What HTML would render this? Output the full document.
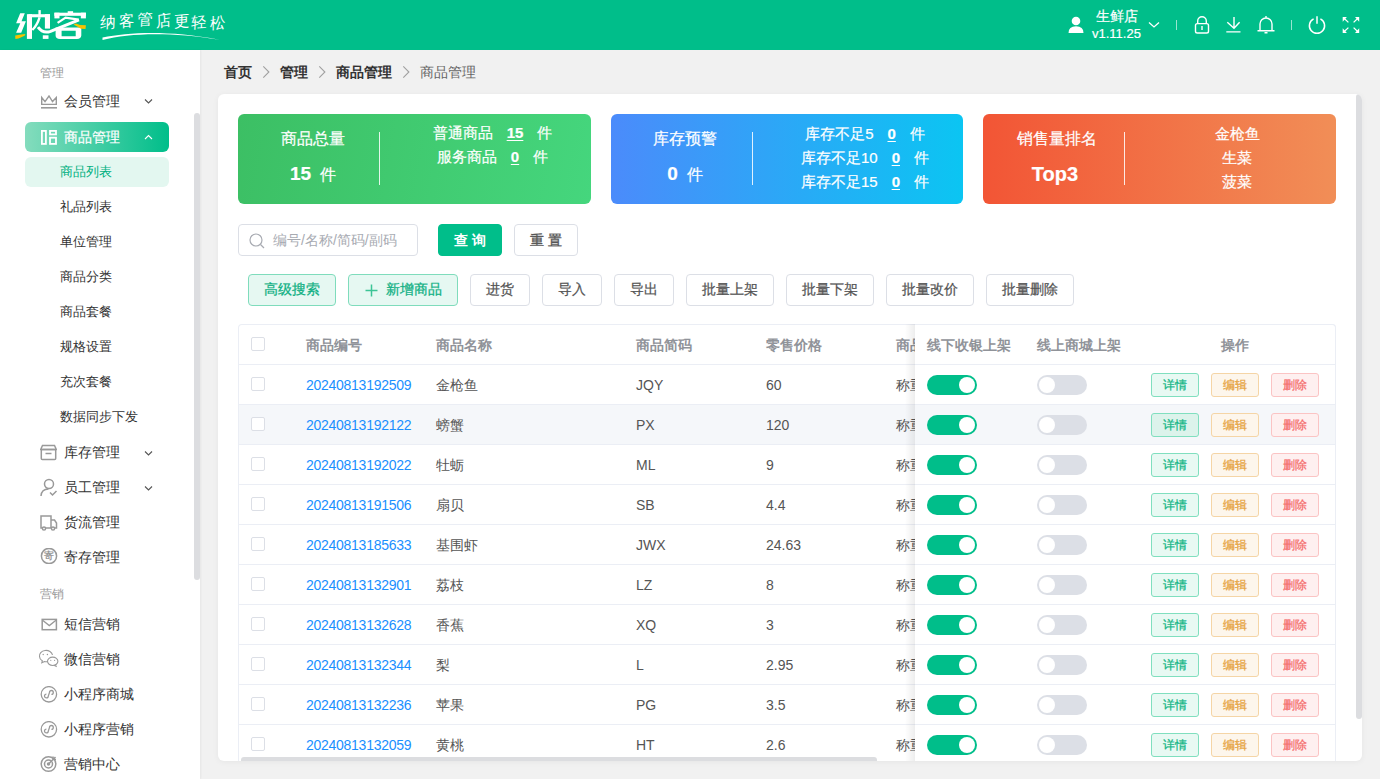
<!DOCTYPE html><html><head><meta charset="utf-8"><style>
*{box-sizing:border-box;margin:0;padding:0}
html,body{width:1380px;height:779px;overflow:hidden;background:#f1f1f1;font-family:"Liberation Sans",sans-serif;color:#333}
div,span{position:absolute;white-space:nowrap}
#hdr{left:0;top:0;width:1380px;height:50px;background:#00be8a}
#side{left:0;top:50px;width:200px;height:729px;background:#fff;box-shadow:1px 0 2px rgba(0,0,0,.05)}
.sec{left:40px;font-size:12px;color:#999;line-height:14px}
.mi{left:64px;font-size:14px;color:#333;line-height:16px}
.sub{left:60px;font-size:13px;color:#333;line-height:15px}
svg{position:absolute}
#card{left:218px;top:94px;width:1144px;height:667px;background:#fff;border-radius:6px;overflow:hidden;box-shadow:0 1px 6px rgba(0,0,0,.05)}
.stat{top:20px;height:90px;border-radius:6px;color:#fff}
.wt{-webkit-text-stroke:0.2px #fff}
.btn{height:32px;border:1px solid #dcdfe6;border-radius:4px;background:#fff;font-size:14px;color:#555;text-align:center;line-height:28px;-webkit-text-stroke:0.25px currentColor}
.th{font-size:14px;font-weight:bold;color:#909399;line-height:16px}
.td{font-size:14px;color:#555;line-height:16px}
.cb{width:14px;height:14px;border:1px solid #dcdfe6;border-radius:2px;background:#fff}
.sw{width:50px;height:20px;border-radius:10px}
.son{background:#00be8a}
.soff{background:#dcdfe6}
.knob{top:2px;width:16px;height:16px;border-radius:8px;background:#fff}
.ob{width:48px;height:24px;border-radius:3px;font-size:12px;text-align:center;line-height:22px;border:1px solid;-webkit-text-stroke:0.25px currentColor}
.ob1{background:#e8f9f3;border-color:#80dfbf;color:#10b584}
.ob2{background:#fdf6ec;border-color:#f5d5a6;color:#e6a23c}
.ob3{background:#fef0f0;border-color:#fbc4c4;color:#f56c6c}
</style></head><body>
<div id="hdr">
<svg style="left:0;top:0" width="240" height="50" viewBox="0 0 240 50">
<g fill="#fff">
<polygon points="20.2,13.2 24.8,13.2 21.5,21.2 25.9,21.2 21.2,32.7 16.1,32.7 20.3,23.2 16.1,23.2"/>
<rect x="26.9" y="14.2" width="5.1" height="24.7"/>
<rect x="28.4" y="14.2" width="21.6" height="3.1"/>
<rect x="38.4" y="10.1" width="2.4" height="7.2"/>
<rect x="44.9" y="14.2" width="5.1" height="14.4"/>
<rect x="42.8" y="35.3" width="5.7" height="3.6"/>
<rect x="67.7" y="11.2" width="5.4" height="2.5"/>
<rect x="54.4" y="12.7" width="31.5" height="3.1"/>
<rect x="54.4" y="12.7" width="5.1" height="5.7"/>
<rect x="80.8" y="12.7" width="5.1" height="5.7"/>
<path d="M55.6 27.6 H81.3 V35.5 Q81 38.9 77 38.9 H60 Q55.6 38.9 55.6 35.5 Z M61.6 30.7 V36.3 H75.7 V30.7 Z" fill-rule="evenodd"/>
</g>
<g fill="none" stroke="#fff" stroke-linecap="butt">
<path d="M39.6 17.3 Q37.2 25 32.3 30" stroke-width="2.4"/>
<path d="M38 27.2 Q43 34 50.5 31.3 L79 19.8" stroke-width="3"/>
<path d="M57.6 22.8 L65.6 17.6 L78.6 19.6" stroke-width="2.2"/>
</g>
<polygon fill="#f6c200" points="15.2,35.6 21,34.6 25.4,34.1 24.6,35.7 18.5,38.4 15.4,38.9"/>
<polygon fill="#f6c200" points="73.6,24.6 75.8,23.4 80,25 85.9,25.2 85.5,28.9 81,28.7"/>
</svg>
<svg style="left:0;top:0" width="240" height="50" viewBox="0 0 240 50"><text x="102" y="27" font-size="15.5" fill="#fff" transform="rotate(-4 109 21) skewX(-6)" style="font-family:'Liberation Serif',serif">纳</text><text x="121" y="26" font-size="15.5" fill="#fff" transform="rotate(-6 128 20) skewX(-6)" style="font-family:'Liberation Serif',serif">客</text><text x="139.5" y="25" font-size="15.5" fill="#fff" transform="rotate(-3 146.5 19) skewX(-6)" style="font-family:'Liberation Serif',serif">管</text><text x="157.5" y="26" font-size="15.5" fill="#fff" transform="rotate(-8 164.5 20) skewX(-6)" style="font-family:'Liberation Serif',serif">店</text><text x="176" y="26" font-size="15.5" fill="#fff" transform="rotate(-5 183 20) skewX(-6)" style="font-family:'Liberation Serif',serif">更</text><text x="193.5" y="27" font-size="15.5" fill="#fff" transform="rotate(-4 200.5 21) skewX(-6)" style="font-family:'Liberation Serif',serif">轻</text><text x="212" y="28" font-size="15.5" fill="#fff" transform="rotate(-6 219 22) skewX(-6)" style="font-family:'Liberation Serif',serif">松</text><path d="M102.5 40 C130 33 170 31.7 219.5 39.8 C170 30.4 130 32 102.5 37.6 Z" fill="#fff"/></svg>
<svg style="left:1066px;top:16px" width="20" height="18" viewBox="0 0 20 18"><circle cx="10" cy="5" r="4.3" fill="#fff"/><path d="M2.5 17 Q2.5 10.3 10 10.3 Q17.5 10.3 17.5 17 Z" fill="#fff"/></svg>
<div style="left:1096px;top:7px;font-size:14px;line-height:18px;color:#fff;-webkit-text-stroke:0.2px #fff">生鲜店</div>
<div style="left:1092px;top:25px;font-size:13px;line-height:17px;color:#fff;-webkit-text-stroke:0.2px #fff">v1.11.25</div>
<svg style="left:1147px;top:20px" width="14" height="10" viewBox="0 0 14 10"><path d="M2 2.5 L7 7 L12 2.5" stroke="#fff" stroke-width="1.3" fill="none"/></svg>
<div style="left:1176px;top:20px;width:1px;height:10px;background:rgba(255,255,255,.6)"></div>
<div style="left:1291px;top:20px;width:1px;height:10px;background:rgba(255,255,255,.6)"></div>
<svg style="left:1192px;top:15px" width="20" height="20" viewBox="0 0 20 20" fill="none" stroke="#fff" stroke-width="1.4"><path d="M5.7 8.6 V6 A4.3 4.3 0 0 1 14.3 6 V8.6"/><rect x="3.5" y="8.6" width="13" height="9.4" rx="1.8"/><path d="M10 11.1 V15.1"/></svg>
<svg style="left:1224px;top:15px" width="20" height="20" viewBox="0 0 20 20" fill="none" stroke="#fff" stroke-width="1.4"><path d="M10 2.1 V13 M3.3 7.2 L10 13.2 L15.6 7.2 M2.3 16.9 H16.5"/></svg>
<svg style="left:1256px;top:15px" width="20" height="20" viewBox="0 0 20 20" fill="none" stroke="#fff" stroke-width="1.4"><path d="M4 15.5 V9 A6 6 0 0 1 16 9 V15.5 M1.5 15.8 H18.5 M10 1 V3 M8.5 17.8 H11.5"/></svg>
<svg style="left:1307px;top:15px" width="20" height="20" viewBox="0 0 20 20" fill="none" stroke="#fff" stroke-width="1.5"><path d="M6.6 3.9 A7.6 7.6 0 1 0 13.4 3.9 M10 1.2 V8.8"/></svg>
<svg style="left:1341px;top:15px" width="20" height="20" viewBox="0 0 20 20"><g fill="#fff"><polygon points="1.7,1.9 5.9,1.9 1.7,6.8"/><polygon points="18.2,1.9 14,1.9 18.2,6.8"/><polygon points="1.7,18.1 5.9,18.1 1.7,13.2"/><polygon points="18.2,18.1 14,18.1 18.2,13.2"/></g><path d="M2.5 2.7 L7.4 7.4 M17.4 2.7 L12.6 7.4 M2.5 17.3 L7.4 12.6 M17.4 17.3 L12.6 12.6" stroke="#fff" stroke-width="1.3"/></svg>
</div>
<div id="side">
</div>
<div class="sec" style="top:66px">管理</div>
<div class="mi" style="top:93px">会员管理</div>
<svg style="left:40px;top:95px" width="18" height="15" viewBox="0 0 18 15" fill="none" stroke="#999" stroke-width="1.5"><path d="M1.7 2.5 L5 6.6 L9 1 L12.5 6.6 L16.3 2.5 V9.4 H1.7 Z" stroke-linejoin="miter" stroke-width="1.4"/><path d="M1 12.8 H17" stroke-width="1.6"/></svg>
<svg style="left:144px;top:98px" width="10" height="7" viewBox="0 0 10 7"><path d="M1 1.5 L4.5 5 L8 1.5" stroke="#555" stroke-width="1.1" fill="none"/></svg>
<div style="left:25px;top:122px;width:144px;height:30px;border-radius:6px;background:linear-gradient(90deg,#84dcbd 0%,#00be8a 100%)"></div>
<svg style="left:40px;top:129px" width="18" height="17" viewBox="0 0 18 17" fill="none" stroke="#fff" stroke-width="1.8"><rect x="1.9" y="1.9" width="4" height="13"/><rect x="10" y="1.9" width="6" height="3.5"/><rect x="10" y="8.7" width="6" height="6.2"/></svg>
<div class="mi" style="top:129px;color:#fff;-webkit-text-stroke:0.2px #fff">商品管理</div>
<svg style="left:144px;top:134px" width="10" height="7" viewBox="0 0 10 7"><path d="M1 5 L4.5 1.5 L8 5" stroke="#fff" stroke-width="1.1" fill="none"/></svg>
<div style="left:25px;top:157px;width:144px;height:30px;border-radius:6px;background:#e3f7f0"></div>
<div class="sub" style="top:164px;color:#00b07f">商品列表</div>
<div class="sub" style="top:199px;color:#333">礼品列表</div>
<div class="sub" style="top:234px;color:#333">单位管理</div>
<div class="sub" style="top:269px;color:#333">商品分类</div>
<div class="sub" style="top:304px;color:#333">商品套餐</div>
<div class="sub" style="top:339px;color:#333">规格设置</div>
<div class="sub" style="top:374px;color:#333">充次套餐</div>
<div class="sub" style="top:409px;color:#333">数据同步下发</div>
<div class="mi" style="top:444px">库存管理</div>
<svg style="left:144px;top:450px" width="10" height="7" viewBox="0 0 10 7"><path d="M1 1.5 L4.5 5 L8 1.5" stroke="#555" stroke-width="1.1" fill="none"/></svg>
<div class="mi" style="top:479px">员工管理</div>
<svg style="left:144px;top:485px" width="10" height="7" viewBox="0 0 10 7"><path d="M1 1.5 L4.5 5 L8 1.5" stroke="#555" stroke-width="1.1" fill="none"/></svg>
<div class="mi" style="top:514px">货流管理</div>
<div class="mi" style="top:549px">寄存管理</div>
<svg style="left:40px;top:444px" width="17" height="17" viewBox="0 0 17 17" fill="none" stroke="#999" stroke-width="1.5"><path d="M2.5 1.5 H14.5 L16.3 5.5 H0.7 Z"/><rect x="1.3" y="5.5" width="14.4" height="10" rx="1"/><path d="M5.5 9.5 H11.5"/></svg>
<svg style="left:40px;top:478px" width="18" height="19" viewBox="0 0 18 19" fill="none" stroke="#999" stroke-width="1.5"><circle cx="9" cy="6" r="4.5"/><path d="M1 18 Q1.5 11 8.5 11"/><path d="M10 14.5 L12.5 17 L16.5 13"/></svg>
<svg style="left:40px;top:515px" width="18" height="16" viewBox="0 0 18 16" fill="none" stroke="#999" stroke-width="1.5"><path d="M1 1 H11 V13 H1 Z"/><path d="M11 5 H14.5 L16.5 8 V13 H11"/><circle cx="4" cy="13.5" r="1.6" fill="#fff"/><circle cx="13" cy="13.5" r="1.6" fill="#fff"/></svg>
<svg style="left:40px;top:548px" width="18" height="16" viewBox="0 0 18 16" fill="none" stroke="#999" stroke-width="1.5"><circle cx="9" cy="8" r="7.6"/><text x="9" y="11.4" font-size="9.5" font-weight="bold" text-anchor="middle" fill="#999" stroke="none">寄</text></svg>
<div class="sec" style="top:587px">营销</div>
<div class="mi" style="top:616px">短信营销</div>
<div class="mi" style="top:651px">微信营销</div>
<div class="mi" style="top:686px">小程序商城</div>
<div class="mi" style="top:721px">小程序营销</div>
<div class="mi" style="top:756px">营销中心</div>
<svg style="left:39px;top:616px" width="20" height="16" viewBox="0 0 20 16" fill="none" stroke="#999" stroke-width="1.5"><rect x="3.2" y="3.4" width="14.2" height="10.3" stroke-width="1.5"/><path d="M3.6 4.2 L10.3 9.6 L17 4.2" stroke-width="1.3"/></svg>
<svg style="left:38px;top:649px" width="22" height="19" viewBox="0 0 22 19" fill="none" stroke="#999" stroke-width="1.5"><path d="M9.5 12.5 Q8.5 13 6.5 12.6 L3.8 13.8 L4.3 11.8 Q1.5 10 1.5 7.5 A6.5 5.3 0 0 1 14.5 6" stroke-width="1.1"/><ellipse cx="14.7" cy="12.3" rx="5.2" ry="4.2" stroke-width="1.1"/><path d="M17.5 16 L18.5 17.6 L16 16.4" stroke-width="1"/><circle cx="5.2" cy="5.5" r="0.7" fill="#999" stroke="none"/><circle cx="9.4" cy="5.5" r="0.7" fill="#999" stroke="none"/><circle cx="12.8" cy="11.3" r="0.6" fill="#999" stroke="none"/><circle cx="16.6" cy="11.3" r="0.6" fill="#999" stroke="none"/></svg>
<svg style="left:40px;top:686px" width="18" height="18" viewBox="0 0 18 18" fill="none" stroke="#999" stroke-width="1.5"><circle cx="8.9" cy="8.3" r="7.7" stroke-width="1.3"/><path d="M6.4 8.1 A1.9 1.9 0 1 0 8.3 10 L9.5 6.4 A1.9 1.9 0 1 1 11.4 8.3" stroke-width="1.3"/></svg>
<svg style="left:40px;top:721px" width="18" height="18" viewBox="0 0 18 18" fill="none" stroke="#999" stroke-width="1.5"><circle cx="8.9" cy="8.3" r="7.7" stroke-width="1.3"/><path d="M6.4 8.1 A1.9 1.9 0 1 0 8.3 10 L9.5 6.4 A1.9 1.9 0 1 1 11.4 8.3" stroke-width="1.3"/></svg>
<svg style="left:40px;top:755px" width="18" height="18" viewBox="0 0 18 18" fill="none" stroke="#999" stroke-width="1.5"><circle cx="8.5" cy="9" r="7.3"/><circle cx="8.5" cy="9" r="4"/><circle cx="8.5" cy="9" r="1" fill="#999"/><path d="M8.5 9 L15.5 2 M13 1.5 V4.5 H16"/></svg>
<div style="left:194px;top:113px;width:6px;height:467px;border-radius:3px;background:#dcdde0"></div>
<div style="left:224px;top:63px;font-size:14px;line-height:18px;color:#333;font-weight:bold">首页</div>
<div style="left:280px;top:63px;font-size:14px;line-height:18px;color:#333;font-weight:bold">管理</div>
<div style="left:336px;top:63px;font-size:14px;line-height:18px;color:#333;font-weight:bold">商品管理</div>
<div style="left:420px;top:63px;font-size:14px;line-height:18px;color:#666">商品管理</div>
<svg style="left:262px;top:65px" width="8" height="14" viewBox="0 0 8 14"><path d="M1.3 1.3 L6.9 7 L1.3 12.7" stroke="#a0a0a0" stroke-width="1.1" fill="none"/></svg>
<svg style="left:318px;top:65px" width="8" height="14" viewBox="0 0 8 14"><path d="M1.3 1.3 L6.9 7 L1.3 12.7" stroke="#a0a0a0" stroke-width="1.1" fill="none"/></svg>
<svg style="left:402px;top:65px" width="8" height="14" viewBox="0 0 8 14"><path d="M1.3 1.3 L6.9 7 L1.3 12.7" stroke="#a0a0a0" stroke-width="1.1" fill="none"/></svg>
<div id="card">
<div class="stat" style="left:20px;width:353px;background:linear-gradient(100deg,#3cbf64 0%,#45d67d 100%)">
</div>
<div class="stat" style="left:393px;width:352px;background:linear-gradient(90deg,#4b8bfb 0%,#0bc5f2 100%)">
</div>
<div class="stat" style="left:765px;width:353px;background:linear-gradient(90deg,#f25535 0%,#f18e57 100%)">
</div>
<div class="wt" style="left:-55px;width:300px;text-align:center;top:35px;font-size:16px;line-height:20px;color:#fff;font-weight:normal">商品总量</div>
<div class="wt" style="left:-55px;width:300px;text-align:center;top:69px;font-size:16px;line-height:22px;color:#fff;font-weight:normal"><b style="font-size:19px">15</b>&nbsp; 件</div>
<div style="left:161px;top:38px;width:1px;height:53px;background:rgba(255,255,255,.85)"></div>
<div class="wt" style="left:124.5px;width:300px;top:29px;height:20px;display:flex;justify-content:center;font-size:15px;line-height:20px;color:#fff"><span style="position:static">普通商品</span><span style="position:static;margin-left:14px;text-decoration:underline;text-underline-offset:2px;font-weight:bold">15</span><span style="position:static;margin-left:14px">件</span></div>
<div class="wt" style="left:124.5px;width:300px;top:53px;height:20px;display:flex;justify-content:center;font-size:15px;line-height:20px;color:#fff"><span style="position:static">服务商品</span><span style="position:static;margin-left:14px;text-decoration:underline;text-underline-offset:2px;font-weight:bold">0</span><span style="position:static;margin-left:14px">件</span></div>
<div class="wt" style="left:317px;width:300px;text-align:center;top:35px;font-size:16px;line-height:20px;color:#fff;font-weight:normal">库存预警</div>
<div class="wt" style="left:317px;width:300px;text-align:center;top:69px;font-size:16px;line-height:22px;color:#fff;font-weight:normal"><b style="font-size:19px">0</b>&nbsp; 件</div>
<div style="left:534px;top:38px;width:1px;height:53px;background:rgba(255,255,255,.85)"></div>
<div class="wt" style="left:497px;width:300px;top:30px;height:20px;display:flex;justify-content:center;font-size:15px;line-height:20px;color:#fff"><span style="position:static">库存不足5</span><span style="position:static;margin-left:14px;text-decoration:underline;text-underline-offset:2px;font-weight:bold">0</span><span style="position:static;margin-left:14px">件</span></div>
<div class="wt" style="left:497px;width:300px;top:54px;height:20px;display:flex;justify-content:center;font-size:15px;line-height:20px;color:#fff"><span style="position:static">库存不足10</span><span style="position:static;margin-left:14px;text-decoration:underline;text-underline-offset:2px;font-weight:bold">0</span><span style="position:static;margin-left:14px">件</span></div>
<div class="wt" style="left:497px;width:300px;top:78px;height:20px;display:flex;justify-content:center;font-size:15px;line-height:20px;color:#fff"><span style="position:static">库存不足15</span><span style="position:static;margin-left:14px;text-decoration:underline;text-underline-offset:2px;font-weight:bold">0</span><span style="position:static;margin-left:14px">件</span></div>
<div class="wt" style="left:689px;width:300px;text-align:center;top:35px;font-size:16px;line-height:20px;color:#fff;font-weight:normal">销售量排名</div>
<div class="wt" style="left:687px;width:300px;text-align:center;top:68px;font-size:20px;line-height:24px;color:#fff;font-weight:bold"><b>Top3</b></div>
<div style="left:906px;top:38px;width:1px;height:53px;background:rgba(255,255,255,.85)"></div>
<div class="wt" style="left:869px;width:300px;text-align:center;top:30px;font-size:15px;line-height:20px;color:#fff;font-weight:normal">金枪鱼</div>
<div class="wt" style="left:869px;width:300px;text-align:center;top:54px;font-size:15px;line-height:20px;color:#fff;font-weight:normal">生菜</div>
<div class="wt" style="left:869px;width:300px;text-align:center;top:78px;font-size:15px;line-height:20px;color:#fff;font-weight:normal">菠菜</div>
<div style="left:20px;top:130px;width:180px;height:32px;border:1px solid #dcdfe6;border-radius:4px;background:#fff"></div>
<svg style="left:31px;top:139px" width="16" height="16" viewBox="0 0 16 16" fill="none" stroke="#a8abb2" stroke-width="1.2"><circle cx="7" cy="7" r="6"/><path d="M11.5 11.5 L15 15"/></svg>
<div style="left:55px;top:138px;font-size:14px;line-height:16px;color:#a8abb2">编号/名称/简码/副码</div>
<div class="btn" style="left:220px;top:130px;width:64px;background:#00be8a;border-color:#00be8a;color:#fff;font-weight:bold;letter-spacing:4px;padding-left:4px;-webkit-text-stroke:0;line-height:31px">查询</div>
<div class="btn" style="left:296px;top:130px;width:64px;letter-spacing:4px;padding-left:4px;-webkit-text-stroke:0.35px #555;color:#555;line-height:31px">重置</div>
<div class="btn" style="left:30px;top:180px;width:88px;background:#e6f8f2;border-color:#7fdcbc;color:#10b083">高级搜索</div>
<div class="btn" style="left:130px;top:180px;width:110px;background:#e6f8f2;border-color:#7fdcbc;color:#10b083;text-align:left;padding-left:37px">新增商品</div>
<svg style="left:147px;top:190px" width="13" height="13" viewBox="0 0 13 13"><path d="M6.5 0.5 V12.5 M0.5 6.5 H12.5" stroke="#3cc496" stroke-width="1.5"/></svg>
<div class="btn" style="left:252px;top:180px;width:60px">进货</div>
<div class="btn" style="left:324px;top:180px;width:60px">导入</div>
<div class="btn" style="left:396px;top:180px;width:60px">导出</div>
<div class="btn" style="left:468px;top:180px;width:88px">批量上架</div>
<div class="btn" style="left:568px;top:180px;width:88px">批量下架</div>
<div class="btn" style="left:668px;top:180px;width:88px">批量改价</div>
<div class="btn" style="left:768px;top:180px;width:88px">批量删除</div>
<div style="left:20px;top:230px;width:1098px;height:441px;border:1px solid #ebeef5;border-bottom:none;border-radius:4px 4px 0 0;background:#fff"></div>
<div class="th" style="left:88px;top:243px">商品编号</div>
<div class="th" style="left:218px;top:243px">商品名称</div>
<div class="th" style="left:418px;top:243px">商品简码</div>
<div class="th" style="left:548px;top:243px">零售价格</div>
<div class="th" style="left:678px;top:243px">商品类型</div>
<div class="cb" style="left:33px;top:243px"></div>
<div style="left:21px;top:270px;width:1096px;height:1px;background:#ebeef5"></div>
<div class="cb" style="left:33px;top:283px"></div>
<div class="td" style="left:88px;top:283px;color:#1a8fff;letter-spacing:-0.27px">20240813192509</div>
<div class="td" style="left:218px;top:283px">金枪鱼</div>
<div class="td" style="left:418px;top:283px">JQY</div>
<div class="td" style="left:548px;top:283px">60</div>
<div class="td" style="left:678px;top:283px">称重商品</div>
<div style="left:21px;top:311px;width:1096px;height:39px;background:#f5f7fa"></div>
<div style="left:21px;top:310px;width:1096px;height:1px;background:#ebeef5"></div>
<div class="cb" style="left:33px;top:323px"></div>
<div class="td" style="left:88px;top:323px;color:#1a8fff;letter-spacing:-0.27px">20240813192122</div>
<div class="td" style="left:218px;top:323px">螃蟹</div>
<div class="td" style="left:418px;top:323px">PX</div>
<div class="td" style="left:548px;top:323px">120</div>
<div class="td" style="left:678px;top:323px">称重商品</div>
<div style="left:21px;top:350px;width:1096px;height:1px;background:#ebeef5"></div>
<div class="cb" style="left:33px;top:363px"></div>
<div class="td" style="left:88px;top:363px;color:#1a8fff;letter-spacing:-0.27px">20240813192022</div>
<div class="td" style="left:218px;top:363px">牡蛎</div>
<div class="td" style="left:418px;top:363px">ML</div>
<div class="td" style="left:548px;top:363px">9</div>
<div class="td" style="left:678px;top:363px">称重商品</div>
<div style="left:21px;top:390px;width:1096px;height:1px;background:#ebeef5"></div>
<div class="cb" style="left:33px;top:403px"></div>
<div class="td" style="left:88px;top:403px;color:#1a8fff;letter-spacing:-0.27px">20240813191506</div>
<div class="td" style="left:218px;top:403px">扇贝</div>
<div class="td" style="left:418px;top:403px">SB</div>
<div class="td" style="left:548px;top:403px">4.4</div>
<div class="td" style="left:678px;top:403px">称重商品</div>
<div style="left:21px;top:430px;width:1096px;height:1px;background:#ebeef5"></div>
<div class="cb" style="left:33px;top:443px"></div>
<div class="td" style="left:88px;top:443px;color:#1a8fff;letter-spacing:-0.27px">20240813185633</div>
<div class="td" style="left:218px;top:443px">基围虾</div>
<div class="td" style="left:418px;top:443px">JWX</div>
<div class="td" style="left:548px;top:443px">24.63</div>
<div class="td" style="left:678px;top:443px">称重商品</div>
<div style="left:21px;top:470px;width:1096px;height:1px;background:#ebeef5"></div>
<div class="cb" style="left:33px;top:483px"></div>
<div class="td" style="left:88px;top:483px;color:#1a8fff;letter-spacing:-0.27px">20240813132901</div>
<div class="td" style="left:218px;top:483px">荔枝</div>
<div class="td" style="left:418px;top:483px">LZ</div>
<div class="td" style="left:548px;top:483px">8</div>
<div class="td" style="left:678px;top:483px">称重商品</div>
<div style="left:21px;top:510px;width:1096px;height:1px;background:#ebeef5"></div>
<div class="cb" style="left:33px;top:523px"></div>
<div class="td" style="left:88px;top:523px;color:#1a8fff;letter-spacing:-0.27px">20240813132628</div>
<div class="td" style="left:218px;top:523px">香蕉</div>
<div class="td" style="left:418px;top:523px">XQ</div>
<div class="td" style="left:548px;top:523px">3</div>
<div class="td" style="left:678px;top:523px">称重商品</div>
<div style="left:21px;top:550px;width:1096px;height:1px;background:#ebeef5"></div>
<div class="cb" style="left:33px;top:563px"></div>
<div class="td" style="left:88px;top:563px;color:#1a8fff;letter-spacing:-0.27px">20240813132344</div>
<div class="td" style="left:218px;top:563px">梨</div>
<div class="td" style="left:418px;top:563px">L</div>
<div class="td" style="left:548px;top:563px">2.95</div>
<div class="td" style="left:678px;top:563px">称重商品</div>
<div style="left:21px;top:590px;width:1096px;height:1px;background:#ebeef5"></div>
<div class="cb" style="left:33px;top:603px"></div>
<div class="td" style="left:88px;top:603px;color:#1a8fff;letter-spacing:-0.27px">20240813132236</div>
<div class="td" style="left:218px;top:603px">苹果</div>
<div class="td" style="left:418px;top:603px">PG</div>
<div class="td" style="left:548px;top:603px">3.5</div>
<div class="td" style="left:678px;top:603px">称重商品</div>
<div style="left:21px;top:630px;width:1096px;height:1px;background:#ebeef5"></div>
<div class="cb" style="left:33px;top:643px"></div>
<div class="td" style="left:88px;top:643px;color:#1a8fff;letter-spacing:-0.27px">20240813132059</div>
<div class="td" style="left:218px;top:643px">黄桃</div>
<div class="td" style="left:418px;top:643px">HT</div>
<div class="td" style="left:548px;top:643px">2.6</div>
<div class="td" style="left:678px;top:643px">称重商品</div>
<div style="left:697px;top:230px;width:421px;height:441px;background:#fff;border-top:1px solid #ebeef5;border-right:1px solid #ebeef5;border-radius:0 4px 0 0"></div>
<div style="left:687px;top:230px;width:10px;height:441px;background:linear-gradient(90deg,rgba(0,0,0,0),rgba(0,0,0,.07))"></div>
<div class="th" style="left:709px;top:243px">线下收银上架</div>
<div class="th" style="left:819px;top:243px">线上商城上架</div>
<div class="th" style="left:1003px;top:243px">操作</div>
<div style="left:697px;top:270px;width:420px;height:1px;background:#ebeef5"></div>
<div class="sw son" style="left:709px;top:281px"><div class="knob" style="left:32px"></div></div>
<div class="sw soff" style="left:819px;top:281px"><div class="knob" style="left:2px"></div></div>
<div class="ob ob1" style="left:933px;top:279px">详情</div>
<div class="ob ob2" style="left:993px;top:279px">编辑</div>
<div class="ob ob3" style="left:1053px;top:279px">删除</div>
<div style="left:697px;top:311px;width:420px;height:39px;background:#f5f7fa"></div>
<div style="left:697px;top:310px;width:420px;height:1px;background:#ebeef5"></div>
<div class="sw son" style="left:709px;top:321px"><div class="knob" style="left:32px"></div></div>
<div class="sw soff" style="left:819px;top:321px"><div class="knob" style="left:2px"></div></div>
<div class="ob ob1" style="left:933px;top:319px;background:#dcf3eb">详情</div>
<div class="ob ob2" style="left:993px;top:319px">编辑</div>
<div class="ob ob3" style="left:1053px;top:319px">删除</div>
<div style="left:697px;top:350px;width:420px;height:1px;background:#ebeef5"></div>
<div class="sw son" style="left:709px;top:361px"><div class="knob" style="left:32px"></div></div>
<div class="sw soff" style="left:819px;top:361px"><div class="knob" style="left:2px"></div></div>
<div class="ob ob1" style="left:933px;top:359px">详情</div>
<div class="ob ob2" style="left:993px;top:359px">编辑</div>
<div class="ob ob3" style="left:1053px;top:359px">删除</div>
<div style="left:697px;top:390px;width:420px;height:1px;background:#ebeef5"></div>
<div class="sw son" style="left:709px;top:401px"><div class="knob" style="left:32px"></div></div>
<div class="sw soff" style="left:819px;top:401px"><div class="knob" style="left:2px"></div></div>
<div class="ob ob1" style="left:933px;top:399px">详情</div>
<div class="ob ob2" style="left:993px;top:399px">编辑</div>
<div class="ob ob3" style="left:1053px;top:399px">删除</div>
<div style="left:697px;top:430px;width:420px;height:1px;background:#ebeef5"></div>
<div class="sw son" style="left:709px;top:441px"><div class="knob" style="left:32px"></div></div>
<div class="sw soff" style="left:819px;top:441px"><div class="knob" style="left:2px"></div></div>
<div class="ob ob1" style="left:933px;top:439px">详情</div>
<div class="ob ob2" style="left:993px;top:439px">编辑</div>
<div class="ob ob3" style="left:1053px;top:439px">删除</div>
<div style="left:697px;top:470px;width:420px;height:1px;background:#ebeef5"></div>
<div class="sw son" style="left:709px;top:481px"><div class="knob" style="left:32px"></div></div>
<div class="sw soff" style="left:819px;top:481px"><div class="knob" style="left:2px"></div></div>
<div class="ob ob1" style="left:933px;top:479px">详情</div>
<div class="ob ob2" style="left:993px;top:479px">编辑</div>
<div class="ob ob3" style="left:1053px;top:479px">删除</div>
<div style="left:697px;top:510px;width:420px;height:1px;background:#ebeef5"></div>
<div class="sw son" style="left:709px;top:521px"><div class="knob" style="left:32px"></div></div>
<div class="sw soff" style="left:819px;top:521px"><div class="knob" style="left:2px"></div></div>
<div class="ob ob1" style="left:933px;top:519px">详情</div>
<div class="ob ob2" style="left:993px;top:519px">编辑</div>
<div class="ob ob3" style="left:1053px;top:519px">删除</div>
<div style="left:697px;top:550px;width:420px;height:1px;background:#ebeef5"></div>
<div class="sw son" style="left:709px;top:561px"><div class="knob" style="left:32px"></div></div>
<div class="sw soff" style="left:819px;top:561px"><div class="knob" style="left:2px"></div></div>
<div class="ob ob1" style="left:933px;top:559px">详情</div>
<div class="ob ob2" style="left:993px;top:559px">编辑</div>
<div class="ob ob3" style="left:1053px;top:559px">删除</div>
<div style="left:697px;top:590px;width:420px;height:1px;background:#ebeef5"></div>
<div class="sw son" style="left:709px;top:601px"><div class="knob" style="left:32px"></div></div>
<div class="sw soff" style="left:819px;top:601px"><div class="knob" style="left:2px"></div></div>
<div class="ob ob1" style="left:933px;top:599px">详情</div>
<div class="ob ob2" style="left:993px;top:599px">编辑</div>
<div class="ob ob3" style="left:1053px;top:599px">删除</div>
<div style="left:697px;top:630px;width:420px;height:1px;background:#ebeef5"></div>
<div class="sw son" style="left:709px;top:641px"><div class="knob" style="left:32px"></div></div>
<div class="sw soff" style="left:819px;top:641px"><div class="knob" style="left:2px"></div></div>
<div class="ob ob1" style="left:933px;top:639px">详情</div>
<div class="ob ob2" style="left:993px;top:639px">编辑</div>
<div class="ob ob3" style="left:1053px;top:639px">删除</div>
<div style="left:23px;top:663px;width:636px;height:6px;border-radius:3px;background:#dcdde0"></div>
<div style="left:1138px;top:0px;width:6px;height:625px;border-radius:3px;background:#dcdde0"></div>
</div>
</body></html>
